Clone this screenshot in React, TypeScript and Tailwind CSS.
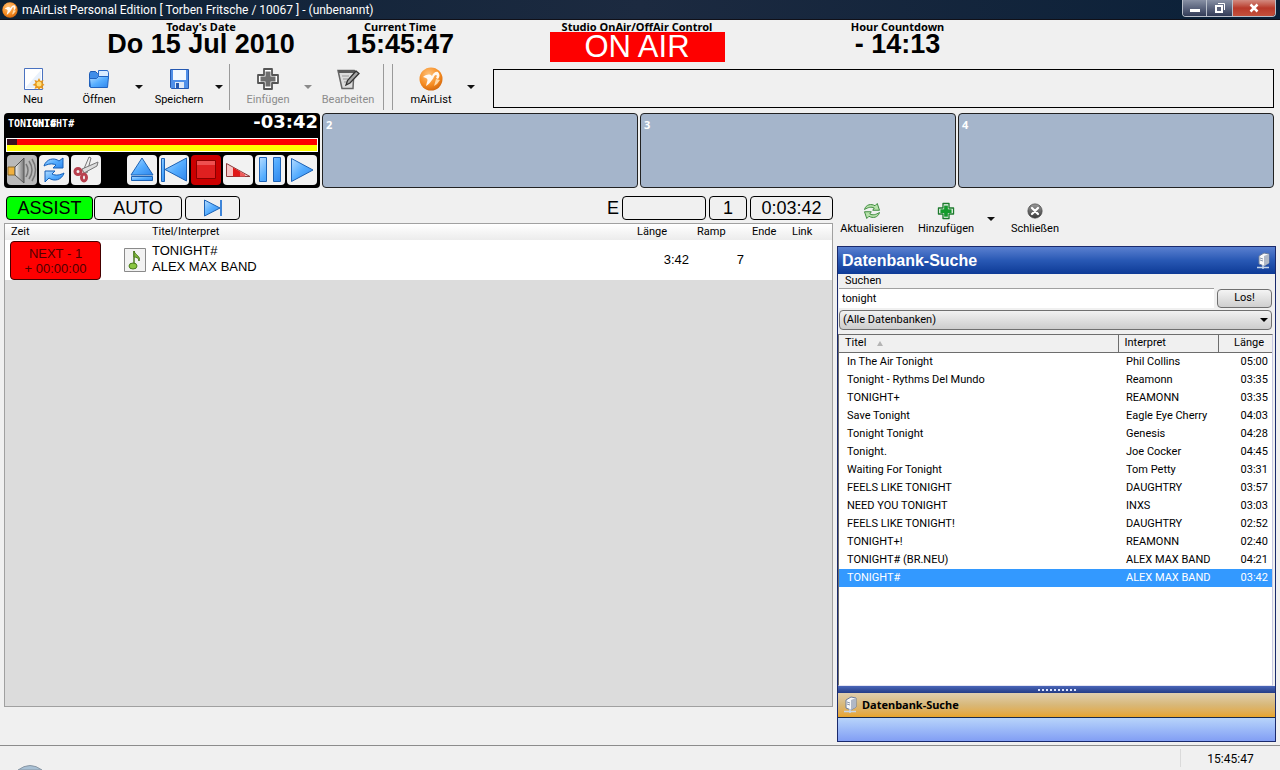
import type { ReactNode } from 'react'

type IconProps = { className?: string }

type Song = {
    title: string
    artist: string
    length: string
    selected?: boolean
}

const songs: Song[] = [
    { title: 'In The Air Tonight', artist: 'Phil Collins', length: '05:00' },
    { title: 'Tonight - Rythms Del Mundo', artist: 'Reamonn', length: '03:35' },
    { title: 'TONIGHT+', artist: 'REAMONN', length: '03:35' },
    { title: 'Save Tonight', artist: 'Eagle Eye Cherry', length: '04:03' },
    { title: 'Tonight Tonight', artist: 'Genesis', length: '04:28' },
    { title: 'Tonight.', artist: 'Joe Cocker', length: '04:45' },
    { title: 'Waiting For Tonight', artist: 'Tom Petty', length: '03:31' },
    { title: 'FEELS LIKE TONIGHT', artist: 'DAUGHTRY', length: '03:57' },
    { title: 'NEED YOU TONIGHT', artist: 'INXS', length: '03:03' },
    { title: 'FEELS LIKE TONIGHT!', artist: 'DAUGHTRY', length: '02:52' },
    { title: 'TONIGHT+!', artist: 'REAMONN', length: '02:40' },
    { title: 'TONIGHT# (BR.NEU)', artist: 'ALEX MAX BAND', length: '04:21' },
    { title: 'TONIGHT#', artist: 'ALEX MAX BAND', length: '03:42', selected: true },
]

/* ---------- icons ---------- */

const Gradients = () => (
    <svg width="0" height="0" className="absolute" aria-hidden="true">
        <defs>
            <linearGradient id="blue" x1="0" y1="0" x2="1" y2="1">
                <stop offset="0" stopColor="#b5dcff" />
                <stop offset="0.5" stopColor="#55adff" />
                <stop offset="1" stopColor="#2f86ec" />
            </linearGradient>
            <radialGradient id="orange" cx="0.4" cy="0.3" r="0.8">
                <stop offset="0" stopColor="#ffc27a" />
                <stop offset="0.6" stopColor="#f58a1f" />
                <stop offset="1" stopColor="#c85e0a" />
            </radialGradient>
            <linearGradient id="grey" x1="0" y1="0" x2="0" y2="1">
                <stop offset="0" stopColor="#9a9a9a" />
                <stop offset="1" stopColor="#3a3a3a" />
            </linearGradient>
            <linearGradient id="steel" x1="0" y1="0" x2="1" y2="0">
                <stop offset="0" stopColor="#f4f4f4" />
                <stop offset="1" stopColor="#777" />
            </linearGradient>
        </defs>
    </svg>
)

const LogoIcon = ({ className }: IconProps) => (
    <svg viewBox="0 0 24 24" className={className}>
        <circle cx="12" cy="12" r="11.5" fill="url(#orange)" />
        <path d="M4 10c4-3 7-3 9-1 1-3 4-5 6-4 2 2 2 5 0 7l-2-1c1-2 1-3 0-3-2 0-2 3-4 5-2 3-4 5-6 6l1-4c1-2 1-4-4-5z" fill="#fff" opacity="0.92" />
        <path d="M17 12l4 1-3 4-3 2z" fill="#ffd9a8" />
    </svg>
)

const NewIcon = () => (
    <svg viewBox="0 0 24 24" className="size-6">
        <path d="M3.5 1.5h18v21h-18z" fill="#fff" stroke="#4a72c0" />
        <path d="M5 20L20 3v18H5z" fill="#e9f1fb" />
        <path d="M18 11l1.500 3 3-1-1 3 2 2-2 1 1 3-3-1-1.500 2-1.500-2-3 1 1-3-3-1 3-2-1-3 3 1z" fill="#e8981c" />
        <circle cx="18" cy="17" r="2.500" fill="#ffe07a" />
    </svg>
)

const OpenIcon = () => (
    <svg viewBox="0 0 24 24" className="size-6">
        <path d="M2.500 6.500l1-2h5l2 2h9v13h-17z" fill="#3f8de8" stroke="#1d5cb5" />
        <path d="M11.500 3.500h9l1 2v6h-10z" fill="#d8ebff" stroke="#2a6ac8" />
        <path d="M3.500 20.500l-1-9h7l2-2h10l-1 11z" fill="url(#blue)" stroke="#1f62c0" />
    </svg>
)

const SaveIcon = () => (
    <svg viewBox="0 0 24 24" className="size-6">
        <path d="M3.500 2.500h18v19h-17l-1-1z" fill="#4f8fe8" stroke="#2458b0" />
        <path d="M6 3h13v10H6z" fill="#f2f8ff" />
        <path d="M8 15h9v6H8z" fill="#dfe9f6" />
        <path d="M9 16h3v5H9z" fill="#2458b0" />
    </svg>
)

const PlusIcon = ({ className, fill, edge }: { className: string; fill: string; edge: string }) => (
    <svg viewBox="0 0 24 24" className={className}>
        <path d="M8 2h8v6h6v8h-6v6H8v-6H2V8h6z" fill="#fff" stroke={edge} strokeWidth="1.800" strokeLinejoin="round" />
        <path d="M9.500 4.500h5v5h5v5h-5v5h-5v-5h-5v-5h5z" fill={fill} />
    </svg>
)

const EditIcon = () => (
    <svg viewBox="0 0 24 24" className="size-6">
        <path d="M2 3.500h16L17 21.500H6z" fill="#dcdcdc" stroke="#666" strokeWidth="1.500" />
        <path d="M2 3h17v3H3z" fill="#5a5a5a" />
        <path d="M6 9h7M7 12h5M8 15h3" stroke="#999" />
        <path d="M20 4l3 2.500-9 9.500-4 2 1.500-4.500z" fill="#a5a5a5" stroke="#333" strokeWidth="1.300" />
    </svg>
)

const SpeakerIcon = () => (
    <svg viewBox="0 0 30 30" className="size-full">
        <path d="M1 12h7v8H1z" fill="#f0b040" stroke="#8a6a2a" />
        <path d="M8 12l9-9v25l-9-8z" fill="url(#steel)" stroke="#555" />
        <path d="M19 9q4 6 0 13M22 6q6 9 0 18M25 4q7 11 0 22" fill="none" stroke="#777" strokeWidth="1.500" />
    </svg>
)

const RepeatIcon = () => (
    <svg viewBox="0 0 30 30" className="size-full">
        <path d="M5 11c2-7 10-9 15-5l4-3v10h-10l3-3c-4-2-8-1-12 1z" fill="url(#blue)" stroke="#145fb8" />
        <path d="M25 18c-2 7-10 9-15 5l-4 4V16h10l-3 3c4 2 8 1 12-1z" fill="url(#blue)" stroke="#145fb8" />
    </svg>
)

const ScissorsIcon = () => (
    <svg viewBox="0 0 30 30" className="size-full">
        <path d="M18 2l2 1-4 15-4-2z" fill="#eee" stroke="#777" />
        <path d="M27 7l-1 4-13 7-2-4z" fill="#ddd" stroke="#777" />
        <circle cx="7" cy="16.500" r="3" fill="none" stroke="#b8404e" strokeWidth="3" />
        <ellipse cx="13" cy="22.500" rx="2.500" ry="3.500" fill="none" stroke="#b8404e" strokeWidth="3" />
    </svg>
)

const EjectIcon = () => (
    <svg viewBox="0 0 30 30" className="size-full">
        <path d="M15 3L26 20H4z" fill="url(#blue)" stroke="#1c62b5" />
        <path d="M4.500 21.500h21v4h-21z" fill="url(#blue)" stroke="#1c62b5" />
    </svg>
)

const StartIcon = () => (
    <svg viewBox="0 0 30 30" className="size-full">
        <path d="M2.500 3.500h3v23h-3z" fill="url(#blue)" stroke="#1c62b5" />
        <path d="M27.500 3v23L6 14.500z" fill="url(#blue)" stroke="#1c62b5" />
    </svg>
)

const StopIcon = () => (
    <svg viewBox="0 0 30 30" className="size-full">
        <path d="M5.500 5.500h19v18h-19z" fill="#e02020" stroke="#8a0000" />
        <path d="M6 6h18v4H6z" fill="#ee5050" />
    </svg>
)

const FadeIcon = () => (
    <svg viewBox="0 0 30 30" className="size-full">
        <path d="M3.500 8.500L27 21.500H3.500z" fill="#f6c4c4" stroke="#8a3a3a" />
        <path d="M10 12.500l7 4v5h-7z" fill="#e01818" />
        <path d="M17 16.500l5 3v2h-5z" fill="#f05a5a" />
    </svg>
)

const PauseIcon = () => (
    <svg viewBox="0 0 30 30" className="size-full">
        <path d="M4.500 2.500h7v24h-7zM18.500 2.500h7v24h-7z" fill="url(#blue)" stroke="#1c62b5" />
    </svg>
)

const PlayIcon = () => (
    <svg viewBox="0 0 30 30" className="size-full">
        <path d="M4.500 3.500L26 15 4.500 26.500z" fill="url(#blue)" stroke="#1c62b5" />
    </svg>
)

const NextIcon = () => (
    <svg viewBox="0 0 22 18" className="h-[18px] w-[22px]">
        <path d="M2.500 1L18 9 2.500 17z" fill="url(#blue)" stroke="#1c62b5" />
        <path d="M18 1h2v16h-2z" fill="#3d84d8" />
    </svg>
)

const NoteIcon = () => (
    <svg viewBox="0 0 22 24" className="h-6 w-[22px]">
        <path d="M.5.5h21v23H.5z" fill="#f2f2f2" stroke="#8a8a8a" />
        <path d="M10 3v13" stroke="#4a7a1c" strokeWidth="1.500" />
        <path d="M10 3c1 4 7 5 5 10 0-3-3-4-5-4z" fill="#7db53a" stroke="#4a7a1c" />
        <ellipse cx="9" cy="18" rx="4" ry="3" fill="#8ac640" stroke="#4a7a1c" />
    </svg>
)

const RefreshIcon = () => (
    <svg viewBox="0 0 24 24" className="h-[18px] w-[18px]">
        <path d="M2 10c2-7 9-8 14-5l3-3 3 9h-9l2-3c-4-2-8-1-13 2z" fill="#b8e2ac" stroke="#3d8a3d" strokeWidth="1.300" />
        <path d="M22 14c-2 7-9 8-14 5l-3 3-3-9h9l-2 3c4 2 8 1 13-2z" fill="#b8e2ac" stroke="#3d8a3d" strokeWidth="1.300" />
    </svg>
)

const CloseIcon = () => (
    <svg viewBox="0 0 24 24" className="h-[18px] w-[18px]">
        <circle cx="12" cy="12" r="9.500" fill="url(#grey)" stroke="#444" />
        <path d="M8 8l8 8M16 8l-8 8" stroke="#fff" strokeWidth="3" strokeLinecap="round" />
    </svg>
)

const DatabaseIcon = () => (
    <svg viewBox="0 0 16 18" className="h-[18px] w-4">
        <path d="M4 4l5-3 5 1v9l-5 3-5-2z" fill="#f8f8f8" stroke="#6b7c9c" />
        <path d="M9 4l5-2v9l-5 3z" fill="#b0b8c6" />
        <path d="M5 6l3 1M5 8l3 1" stroke="#8996ac" />
        <path d="M2 15.500h12M8 13v4" stroke="#c7d6ea" strokeWidth="1.500" />
    </svg>
)

/* ---------- small parts ---------- */

const Arrow = ({ dim }: { dim?: boolean }) => (
    <button type="button" aria-label="Menü" className="flex w-3.5 items-center justify-center">
        <svg viewBox="0 0 8 4" className="h-1 w-2">
            <path d="M0 0h8L4 4z" fill={dim ? '#8a8a8a' : '#111'} />
        </svg>
    </button>
)

type ToolProps = { icon: ReactNode; label: string; disabled?: boolean }

const Tool = ({ icon, label, disabled }: ToolProps) => (
    <button
        type="button"
        disabled={disabled}
        className="flex w-[66px] flex-col items-center justify-center gap-0.5 leading-[14px] disabled:text-[#8c8c8c]"
    >
        {icon}
        {label}
    </button>
)

const Clock = ({ label, value }: { label: string; value: string }) => (
    <div className="flex flex-col items-center whitespace-nowrap">
        <span className="font-['Noto_Sans',sans-serif] font-bold leading-[12px]">{label}</span>
        <span className="font-['Liberation_Sans',sans-serif] text-[27px] font-bold leading-[22px]">{value}</span>
    </div>
)

const playerButtons = [
    { label: 'Eject', icon: <EjectIcon /> },
    { label: 'Start', icon: <StartIcon /> },
    { label: 'Stop', icon: <StopIcon />, active: true },
    { label: 'Fade', icon: <FadeIcon /> },
    { label: 'Pause', icon: <PauseIcon /> },
    { label: 'Play', icon: <PlayIcon /> },
]

const PlayerButton = ({ label, className, children }: { label: string; className: string; children: ReactNode }) => (
    <button type="button" aria-label={label} className={`size-[30px] rounded-sm ${className}`}>
        {children}
    </button>
)

/* ---------- sections ---------- */

const TitleBar = () => (
    <header className="flex h-5 items-start border-b border-[#101018] bg-linear-to-r from-[#0c2136] via-[#1c2a40] to-[#0a2038] pl-0.5 text-white">
        <LogoIcon className="mt-0.5 size-4" />
        <h1 className="ml-1 flex-1 text-[12px] leading-[20px]">
            mAirList Personal Edition [ Torben Fritsche / 10067 ] - (unbenannt)
        </h1>
        <div className="mr-1 flex h-[17px] divide-x divide-[#b9bfca] overflow-hidden rounded-b border border-t-0 border-[#b9bfca]">
            <button type="button" aria-label="Minimieren" className="flex w-6 items-end justify-center bg-linear-to-b from-[#8890a4] to-[#333c58] pb-1">
                <span className="h-[3px] w-2.5 bg-white" />
            </button>
            <button type="button" aria-label="Wiederherstellen" className="flex w-[26px] items-center justify-center bg-linear-to-b from-[#8890a4] to-[#333c58]">
                <svg viewBox="0 0 12 12" className="size-3">
                    <path d="M4 1.500h6.500V8" fill="none" stroke="#fff" />
                    <path d="M2 4h6v6H2z" fill="#59617a" stroke="#fff" strokeWidth="2" />
                </svg>
            </button>
            <button type="button" aria-label="Fenster schließen" className="flex w-[42px] items-center justify-center bg-linear-to-b from-[#d28a80] via-[#b8392a] to-[#c4503c]">
                <svg viewBox="0 0 12 12" className="size-3">
                    <path d="M2.500 2.500l7 7M9.500 2.500l-7 7" stroke="#fff" strokeWidth="2.500" />
                </svg>
            </button>
        </div>
    </header>
)

const Clocks = () => (
    <section className="grid h-11 grid-cols-[101fr_200fr_198fr_276fr_245fr_260fr] pt-px">
        <span />
        <Clock label="Today's Date" value="Do 15 Jul 2010" />
        <Clock label="Current Time" value="15:45:47" />
        <div className="flex flex-col items-center">
            <span className="font-['Noto_Sans',sans-serif] font-bold leading-[11px]">Studio OnAir/OffAir Control</span>
            <button type="button" className="h-[30px] w-[175px] bg-[#fe0000] font-['Liberation_Sans',sans-serif] text-[31px] leading-[30px] text-white">
                ON AIR
            </button>
        </div>
        <Clock label="Hour Countdown" value="- 14:13" />
    </section>
)

const Toolbar = () => (
    <nav className="flex h-[46px] pr-1.5">
        <Tool icon={<NewIcon />} label="Neu" />
        <Tool icon={<OpenIcon />} label="Öffnen" />
        <Arrow />
        <Tool icon={<SaveIcon />} label="Speichern" />
        <Arrow />
        <span className="ml-[3px] mr-[5px] border-l border-[#9a9a9a]" />
        <Tool disabled icon={<PlusIcon className="size-6" fill="#6e6e6e" edge="#555" />} label="Einfügen" />
        <Arrow dim />
        <Tool disabled icon={<EditIcon />} label="Bearbeiten" />
        <span className="ml-0.5 w-2.5 border-x border-[#9a9a9a]" />
        <span className="w-[5px]" />
        <Tool icon={<LogoIcon className="size-6" />} label="mAirList" />
        <Arrow />
        <div className="mb-0.5 ml-[15px] mt-[5px] flex-1 border border-black" />
    </nav>
)

const Players = () => (
    <section className="mt-0.5 grid h-[77px] grid-cols-4 gap-0.5 pb-px pl-1 pr-1.5 pt-px">
        <div className="flex min-w-0 flex-col rounded-sm bg-black px-0.5 text-white">
            <div className="flex h-[25px] justify-between pl-0.5">
                {/* scrolling title, drawn over its own tail */}
                <div className="relative pt-1 font-['DejaVu_Sans_Mono',monospace] text-[10px] font-bold leading-[14px]">
                    <span>TONIGHT#</span>
                    <span className="absolute left-[18px] top-1" aria-hidden="true">TONIGHT#</span>
                </div>
                <span className="font-['DejaVu_Sans',sans-serif] text-[18px] font-bold leading-[17px]">-03:42</span>
            </div>
            <div className="h-3.5 border border-white">
                <div className="flex h-1.5 bg-[#fe0000]">
                    <span className="w-2.5 bg-[#3a1020]" />
                </div>
                <div className="h-1.5 bg-[#ffff00]" />
            </div>
            <div className="mt-[3px] flex justify-between px-px">
                <div className="flex gap-0.5">
                    <PlayerButton label="Vorhören" className="bg-[#b9b9b9]"><SpeakerIcon /></PlayerButton>
                    <PlayerButton label="Wiederholen" className="bg-[#f2f2f2]"><RepeatIcon /></PlayerButton>
                    <PlayerButton label="Schneiden" className="bg-[#f2f2f2]"><ScissorsIcon /></PlayerButton>
                </div>
                <div className="flex gap-0.5">
                    {playerButtons.map(({ label, icon, active }) => (
                        <PlayerButton key={label} label={label} className={active ? 'bg-[#cc0000]' : 'bg-[#f2f2f2]'}>
                            {icon}
                        </PlayerButton>
                    ))}
                </div>
            </div>
        </div>
        {[2, 3, 4].map((n) => (
            <div key={n} className="rounded-sm border border-[#222] bg-[#a5b5cb] px-[3px] pt-1 font-['Noto_Sans',sans-serif] font-bold leading-[14px] text-white">
                {n}
            </div>
        ))}
    </section>
)

const Playlist = () => (
    <section className="flex min-w-0 flex-1 flex-col pl-1 pr-1">
        <div className="flex h-[34px] items-center gap-[3px] pl-0.5 pt-1 font-['Liberation_Sans',sans-serif] text-[18px] leading-[22px]">
            <div className="flex gap-px">
                <button type="button" className="h-6 w-[87px] rounded border border-black bg-[#00ff00]">ASSIST</button>
                <button type="button" className="h-6 w-[88px] rounded border border-black">AUTO</button>
            </div>
            <button type="button" aria-label="Weiter" className="flex h-6 w-[55px] items-center justify-center rounded border border-black">
                <NextIcon />
            </button>
            <span className="ml-auto">E</span>
            <div className="h-6 w-[84px] rounded border border-black" />
            <div className="h-6 w-[38px] rounded border border-black text-center">1</div>
            <div className="h-6 w-[83px] rounded border border-black text-center">0:03:42</div>
        </div>
        <div className="flex-1 border border-[#a0a0a0] bg-[#dcdcdc]">
            <table className="w-full table-fixed text-left">
                <colgroup>
                    <col className="w-[116px]" />
                    <col className="w-[27px]" />
                    <col />
                    <col className="w-[60px]" />
                    <col className="w-[55px]" />
                    <col className="w-10" />
                    <col className="w-11" />
                </colgroup>
                <thead className="h-4 bg-linear-to-b from-white to-[#ececec] leading-[16px]">
                    <tr>
                        <th className="pl-1.5 font-normal">Zeit</th>
                        <th />
                        <th className="pl-1 font-normal">Titel/Interpret</th>
                        <th className="pl-1 font-normal">Länge</th>
                        <th className="pl-1 font-normal">Ramp</th>
                        <th className="pl-1 font-normal">Ende</th>
                        <th className="pl-1 font-normal">Link</th>
                    </tr>
                </thead>
                <tbody>
                    <tr className="h-10 bg-white font-['Liberation_Sans',sans-serif] text-[13px] leading-[16px]">
                        <td className="pl-[5px]">
                            <div className="h-[39px] w-[91px] rounded-sm border border-[#400] bg-[#fe0000] pt-1 text-center leading-[15px] text-[#500000]">
                                NEXT - 1<br />+ 00:00:00
                            </div>
                        </td>
                        <td><div className="pl-[3px]"><NoteIcon /></div></td>
                        <td className="pb-0.5 pl-1">TONIGHT#<br />ALEX MAX BAND</td>
                        <td className="pr-1 text-right">3:42</td>
                        <td className="pr-1 text-right">7</td>
                        <td />
                        <td />
                    </tr>
                </tbody>
            </table>
        </div>
        <div className="h-[38px]" />
    </section>
)

const DatabaseSearch = () => (
    <aside className="mr-1 flex w-[439px] shrink-0 flex-col">
        <nav className="flex h-[57px] pl-0.5 pt-0.5">
            <Tool icon={<RefreshIcon />} label="Aktualisieren" />
            <span className="w-2" />
            <Tool icon={<PlusIcon className="h-[18px] w-[18px]" fill="#149a2c" edge="#1c7a2c" />} label="Hinzufügen" />
            <span className="w-[5px]" />
            <Arrow />
            <span className="w-1" />
            <Tool icon={<CloseIcon />} label="Schließen" />
        </nav>
        <div className="flex flex-1 flex-col border border-[#1a2a6c]">
            <h2 className="flex h-[27px] items-center justify-between bg-linear-to-b from-[#5a80d0] via-[#2858b4] to-[#0d3a96] pl-1 pr-1 font-['Liberation_Sans',sans-serif] text-[16px] font-bold text-white">
                Datenbank-Suche
                <DatabaseIcon />
            </h2>
            <form className="pl-px pr-[3px]" onSubmit={(e) => e.preventDefault()}>
                <label htmlFor="query" className="block pl-1.5 leading-[14px]">Suchen</label>
                <div className="flex gap-[3px]">
                    <input
                        id="query"
                        defaultValue="tonight"
                        className="h-5 min-w-0 flex-1 border-t border-[#a0a0a0] bg-white px-[3px]"
                    />
                    <button type="submit" className="mt-px h-[19px] w-[55px] rounded-sm border border-[#707070] bg-linear-to-b from-[#f4f4f4] to-[#cfcfcf]">
                        Los!
                    </button>
                </div>
                <div className="relative mt-0.5">
                    <select
                        aria-label="Datenbank"
                        className="block h-5 w-full appearance-none rounded-sm border border-[#707070] bg-linear-to-b from-[#f2f2f2] to-[#cdcdcd] px-[3px]"
                    >
                        <option>(Alle Datenbanken)</option>
                    </select>
                    <svg viewBox="0 0 8 4" className="pointer-events-none absolute right-1 top-2 h-1 w-2">
                        <path d="M0 0h8L4 4z" fill="#000" />
                    </svg>
                </div>
            </form>
            <div className="mr-0.5 mt-1 flex-1 border border-[#6d6d6d] border-b-[#e4e4f4] border-r-[#c8c8e0] bg-white">
                <table className="w-full table-fixed text-left">
                    <colgroup>
                        <col />
                        <col className="w-[100px]" />
                        <col className="w-[54px]" />
                    </colgroup>
                    <thead className="bg-[#f0f0f0]">
                        <tr className="h-[17px] leading-[16px]">
                            <th className="border-b border-r border-[#6d6d6d] pl-1.5 font-normal">
                                Titel
                                <svg viewBox="0 0 8 5" className="ml-2.5 inline h-[5px] w-2">
                                    <path d="M4 0l3 5H1z" fill="#b4b4b4" />
                                </svg>
                            </th>
                            <th className="border-b border-r border-[#6d6d6d] pl-1.5 font-normal">Interpret</th>
                            <th className="border-b border-[#6d6d6d] pr-2 text-right font-normal">Länge</th>
                        </tr>
                    </thead>
                    <tbody>
                        {songs.map(({ title, artist, length, selected }, i) => (
                            <tr key={i} className={selected ? 'h-[18px] bg-[#3399ff] text-white' : 'h-[18px]'}>
                                <td className="pl-2 leading-[18px]">{title}</td>
                                <td className="pl-2 leading-[18px]">{artist}</td>
                                <td className="pr-1 text-right leading-[18px]">{length}</td>
                            </tr>
                        ))}
                    </tbody>
                </table>
            </div>
            <div className="flex h-[7px] items-center justify-center gap-0.5 bg-linear-to-b from-[#4a66b8] to-[#243c86]">
                {Array.from({ length: 10 }, (_, i) => (
                    <span key={i} className="size-0.5 bg-[#dfe6ff]" />
                ))}
            </div>
            <button type="button" className="flex h-[25px] items-center gap-1 border-b border-[#1a2a4c] bg-linear-to-b from-[#e0ceae] via-[#d8b878] to-[#e8a428] pl-1 font-['Noto_Sans',sans-serif] text-[11px] font-bold">
                <DatabaseIcon />
                Datenbank-Suche
            </button>
            <div className="h-[23px] bg-linear-to-b from-[#b8d4fa] to-[#829ef4]" />
        </div>
        <div className="h-[3px]" />
    </aside>
)

const StatusBar = () => (
    <footer className="flex h-[25px] items-center overflow-hidden border-t border-[#8c8c8c]">
        <svg viewBox="0 0 28 6" className="ml-4 h-1.5 w-7 self-end">
            <path d="M2 6q12-9 24 0z" fill="#a8c0d4" stroke="#8a98a6" />
        </svg>
        <span className="ml-auto w-[100px] border-l border-[#dadada] pt-0.5 text-center text-[12px] leading-[16px]">15:45:47</span>
    </footer>
)

export default function App() {
    return (
        <div className="flex min-h-screen flex-col bg-[#f0f0f0] font-[Roboto,sans-serif] text-[11px] text-black">
            <Gradients />
            <TitleBar />
            <Clocks />
            <Toolbar />
            <Players />
            <main className="flex flex-1">
                <Playlist />
                <DatabaseSearch />
            </main>
            <StatusBar />
        </div>
    )
}
